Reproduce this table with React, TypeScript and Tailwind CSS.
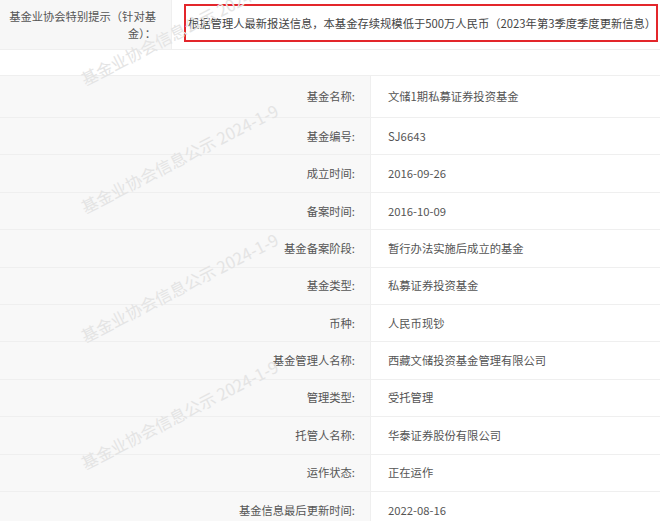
const rows: [string, string][] = [
  ["基金名称:", "文储1期私募证券投资基金"],
  ["基金编号:", "SJ6643"],
  ["成立时间:", "2016-09-26"],
  ["备案时间:", "2016-10-09"],
  ["基金备案阶段:", "暂行办法实施后成立的基金"],
  ["基金类型:", "私募证券投资基金"],
  ["币种:", "人民币现钞"],
  ["基金管理人名称:", "西藏文储投资基金管理有限公司"],
  ["管理类型:", "受托管理"],
  ["托管人名称:", "华泰证券股份有限公司"],
  ["运作状态:", "正在运作"],
  ["基金信息最后更新时间:", "2022-08-16"],
];

// watermark starts (left-centre of each line)
const marks = [80, 208, 337, 464];

export default function App() {
  return (
    <div className="relative h-[521px] w-[660px] overflow-hidden bg-white font-['Noto_Sans_CJK_SC',sans-serif] text-[11.3px] text-[#555]">
      {/* special notice row */}
      <div className="flex h-[50px] border-b border-[#efefef]">
        <div className="w-[172px] shrink-0 border-r border-[#efefef] bg-[#f7f7f7] py-2 pl-[6px] pr-[15px] text-right leading-[17px]">
          基金业协会特别提示（针对基金）：
        </div>
        <div className="flex-1 pl-3 pr-1 pt-[4px]">
          <div className="flex h-[38px] items-center whitespace-nowrap border-2 border-[#e3262b] pl-[2px] text-[#444]">
            根据管理人最新报送信息，本基金存续规模低于500万人民币（2023年第3季度季度更新信息）
          </div>
        </div>
      </div>

      <div className="h-[25px]" />

      {/* detail table */}
      <div className="border-t border-[#efefef]">
        {rows.map(([label, value], i) => (
          <div
            key={label}
            className={`grid grid-cols-[371px_1fr] border-b border-[#efefef] ${i === 0 ? "h-[42px]" : "h-[37.4px]"}`}
          >
            <div className="flex items-center justify-end border-r border-[#efefef] bg-[#f8f8f8] pr-[15px]">
              {label}
            </div>
            <div className="flex items-center pl-[17px]">{value}</div>
          </div>
        ))}
      </div>

      {/* watermarks */}
      {marks.map((y) => (
        <div
          key={y}
          style={{ top: y - 10 }}
          className="pointer-events-none absolute left-[82px] h-[20px] origin-[left_center] -rotate-[27deg] whitespace-nowrap text-[16.5px] leading-[20px] text-[#e4e4e4]"
        >
          基金业协会信息公示 2024-1-9
        </div>
      ))}
    </div>
  );
}
